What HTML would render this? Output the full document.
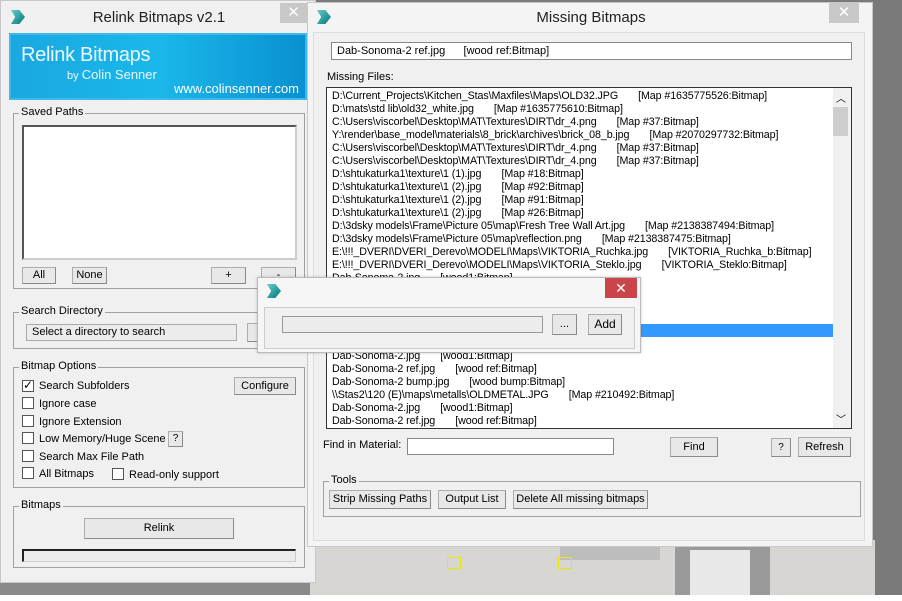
<!DOCTYPE html>
<html><head><meta charset="utf-8"><style>
*{box-sizing:border-box;margin:0;padding:0}
body{width:902px;height:601px;overflow:hidden;position:relative;background:#7a7a7a;font-family:"Liberation Sans",sans-serif;font-size:11px;color:#000}
.a{position:absolute}
.win{background:#f0f0f0;border:1px solid #c8c8c8}
.btn{position:absolute;background:#e8e8e8;border:1px solid #adadad;border-right-color:#8a8a8a;border-bottom-color:#8a8a8a;text-align:center;font-size:11px}
.grp{position:absolute;border:1px solid #a0a0a0}
.grp>.l{position:absolute;top:-8px;left:5px;background:#f0f0f0;padding:0 2px;font-size:11px}
.cb{position:absolute;width:12px;height:12px;border:1px solid #555;background:#fff}
.t{position:absolute;white-space:pre;font-size:11px}
.x{position:absolute;background:#c8c8c8;color:#fff;text-align:center;font-size:15px;line-height:20px}
.logo{position:absolute;width:14px;height:14px;background:linear-gradient(135deg,#6cc,#077);clip-path:polygon(0 0,60% 0,100% 50%,60% 100%,0 100%,30% 50%)}
.row{height:13px;line-height:13px;white-space:pre;font-size:10.7px;letter-spacing:-0.1px}
</style></head><body>
<div class="a" style="left:300px;top:540px;width:575px;height:56px;background:#d8d6d2"></div>
<div class="a" style="left:560px;top:540px;width:100px;height:20px;background:#bdbdbd"></div>
<div class="a" style="left:675px;top:540px;width:95px;height:56px;background:#9a9a9a"></div>
<div class="a" style="left:690px;top:550px;width:60px;height:46px;background:#e8e8e8"></div>
<div class="a" style="left:0;top:580px;width:310px;height:16px;background:#8a8a8a"></div>
<div class="a" style="left:0;top:595px;width:902px;height:6px;background:#fff"></div>
<div class="a" style="left:447px;top:557px;width:14px;height:12px;border:1px solid #e8e800"></div>
<div class="a" style="left:558px;top:557px;width:14px;height:12px;border:1px solid #e8e800"></div>

<div class="a win" style="left:0;top:0;width:316px;height:583px">
<div class="logo" style="left:10px;top:9px"></div>
<div class="t" style="left:0;width:316px;text-align:center;top:8px;font-size:15px;color:#222">Relink Bitmaps v2.1</div>
<div class="x" style="left:279px;top:2px;width:27px;height:20px">✕</div>
<div class="a" style="left:8px;top:32px;width:298px;height:67px;background:linear-gradient(90deg,#1aa8e0,#1ab8ea 50%,#0a90d0);border:2px solid #3fb8ea"></div>
<div class="t" style="left:20px;top:43px;font-size:20px;color:#eaf8ff;letter-spacing:-0.3px">Relink Bitmaps</div>
<div class="t" style="left:66px;top:66px;font-size:11px;color:#eaf8ff">by <span style="font-size:13px">Colin Senner</span></div>
<div class="t" style="left:173px;top:80px;font-size:13px;color:#fff">www.colinsenner.com</div>
<div class="grp" style="left:12px;top:112px;width:292px;height:176px"><span class="l">Saved Paths</span></div>
<div class="a" style="left:21px;top:124px;width:275px;height:135px;background:#fff;border:2px solid #555;border-right-color:#ccc;border-bottom-color:#ccc"></div>
<div class="btn" style="left:21px;top:266px;width:34px;height:17px;line-height:15px">All</div>
<div class="btn" style="left:71px;top:266px;width:35px;height:17px;line-height:15px">None</div>
<div class="btn" style="left:210px;top:266px;width:35px;height:17px;line-height:15px">+</div>
<div class="btn" style="left:260px;top:266px;width:35px;height:17px;line-height:15px">-</div>
<div class="grp" style="left:12px;top:311px;width:292px;height:37px"><span class="l">Search Directory</span></div>
<div class="a" style="left:25px;top:323px;width:211px;height:17px;border:1px solid #aaa;background:#ececec;padding-left:5px;line-height:15px">Select a directory to search</div>
<div class="btn" style="left:246px;top:322px;width:30px;height:19px;line-height:17px">B</div>
<div class="grp" style="left:12px;top:366px;width:292px;height:121px"><span class="l">Bitmap Options</span></div>
<div class="cb" style="left:21px;top:379px"><span style="position:absolute;left:0;top:-3px;font-size:12px">✓</span></div>
<div class="t" style="left:38px;top:379px">Search Subfolders</div>
<div class="btn" style="left:233px;top:376px;width:62px;height:18px;line-height:16px">Configure</div>
<div class="cb" style="left:21px;top:396px"></div><div class="t" style="left:38px;top:397px">Ignore case</div>
<div class="cb" style="left:21px;top:414px"></div><div class="t" style="left:38px;top:415px">Ignore Extension</div>
<div class="cb" style="left:21px;top:431px"></div><div class="t" style="left:38px;top:432px">Low Memory/Huge Scene</div>
<div class="btn" style="left:167px;top:430px;width:15px;height:16px;line-height:14px;font-size:10px">?</div>
<div class="cb" style="left:21px;top:449px"></div><div class="t" style="left:38px;top:450px">Search Max File Path</div>
<div class="cb" style="left:21px;top:466px"></div><div class="t" style="left:38px;top:467px">All Bitmaps</div>
<div class="cb" style="left:111px;top:467px"></div><div class="t" style="left:128px;top:468px">Read-only support</div>
<div class="grp" style="left:12px;top:505px;width:292px;height:62px"><span class="l">Bitmaps</span></div>
<div class="btn" style="left:83px;top:517px;width:150px;height:21px;line-height:19px">Relink</div>
<div class="a" style="left:21px;top:548px;width:274px;height:13px;border:1px solid #ccc;border-top:2px solid #222;border-left:2px solid #222;background:#ececec"></div>
</div>

<div class="a win" style="left:307px;top:2px;width:566px;height:545px;background:#f4f4f4">
<div class="logo" style="left:9px;top:7px"></div>
<div class="t" style="left:0;width:566px;text-align:center;top:6px;font-size:15px;color:#222">Missing Bitmaps</div>
<div class="x" style="left:521px;top:0;width:30px;height:20px">✕</div>
<div class="a" style="left:5px;top:29px;width:552px;height:509px;background:#f0f0f0;border:1px solid #ddd"></div>
<div class="a" style="left:23px;top:39px;width:521px;height:18px;background:#fff;border:1px solid #888;padding-left:5px;line-height:16px;white-space:pre">Dab-Sonoma-2 ref.jpg      [wood ref:Bitmap]</div>
<div class="t" style="left:19px;top:68px">Missing Files:</div>
<div class="a" style="left:18px;top:84px;width:526px;height:342px;background:#fff;border:1px solid #333;padding:2px 0 0 5px;overflow:hidden">
<div class="row">D:\Current_Projects\Kitchen_Stas\Maxfiles\Maps\OLD32.JPG       [Map #1635775526:Bitmap]</div>
<div class="row">D:\mats\std lib\old32_white.jpg       [Map #1635775610:Bitmap]</div>
<div class="row">C:\Users\viscorbel\Desktop\MAT\Textures\DIRT\dr_4.png       [Map #37:Bitmap]</div>
<div class="row">Y:\render\base_model\materials\8_brick\archives\brick_08_b.jpg       [Map #2070297732:Bitmap]</div>
<div class="row">C:\Users\viscorbel\Desktop\MAT\Textures\DIRT\dr_4.png       [Map #37:Bitmap]</div>
<div class="row">C:\Users\viscorbel\Desktop\MAT\Textures\DIRT\dr_4.png       [Map #37:Bitmap]</div>
<div class="row">D:\shtukaturka1\texture\1 (1).jpg       [Map #18:Bitmap]</div>
<div class="row">D:\shtukaturka1\texture\1 (2).jpg       [Map #92:Bitmap]</div>
<div class="row">D:\shtukaturka1\texture\1 (2).jpg       [Map #91:Bitmap]</div>
<div class="row">D:\shtukaturka1\texture\1 (2).jpg       [Map #26:Bitmap]</div>
<div class="row">D:\3dsky models\Frame\Picture 05\map\Fresh Tree Wall Art.jpg       [Map #2138387494:Bitmap]</div>
<div class="row">D:\3dsky models\Frame\Picture 05\map\reflection.png       [Map #2138387475:Bitmap]</div>
<div class="row">E:\!!!_DVERI\DVERI_Derevo\MODELI\Maps\VIKTORIA_Ruchka.jpg       [VIKTORIA_Ruchka_b:Bitmap]</div>
<div class="row">E:\!!!_DVERI\DVERI_Derevo\MODELI\Maps\VIKTORIA_Steklo.jpg       [VIKTORIA_Steklo:Bitmap]</div>
<div class="row">Dab-Sonoma-2.jpg       [wood1:Bitmap]</div>
<div class="row"> </div>
<div class="row"> </div>
<div class="row"> </div>
<div class="row" style="background:#3399ff;margin-left:-5px"> </div>
<div class="row"> </div>
<div class="row">Dab-Sonoma-2.jpg       [wood1:Bitmap]</div>
<div class="row">Dab-Sonoma-2 ref.jpg       [wood ref:Bitmap]</div>
<div class="row">Dab-Sonoma-2 bump.jpg       [wood bump:Bitmap]</div>
<div class="row">\\Stas2\120 (E)\maps\metalls\OLDMETAL.JPG       [Map #210492:Bitmap]</div>
<div class="row">Dab-Sonoma-2.jpg       [wood1:Bitmap]</div>
<div class="row">Dab-Sonoma-2 ref.jpg       [wood ref:Bitmap]</div>
</div>
<div class="a" style="left:525px;top:85px;width:18px;height:340px;background:#f0f0f0"></div>
<div class="a" style="left:525px;top:104px;width:15px;height:29px;background:#cdcdcd"></div>
<div class="t" style="left:528px;top:87px;font-size:10px">︿</div>
<div class="t" style="left:528px;top:408px;font-size:10px">﹀</div>
<div class="t" style="left:15px;top:436px">Find in Material:</div>
<div class="a" style="left:99px;top:435px;width:207px;height:17px;background:#fff;border:1px solid #888"></div>
<div class="btn" style="left:362px;top:434px;width:48px;height:20px;line-height:18px">Find</div>
<div class="btn" style="left:463px;top:435px;width:20px;height:19px;line-height:17px;font-size:10px">?</div>
<div class="btn" style="left:490px;top:434px;width:53px;height:20px;line-height:18px">Refresh</div>
<div class="grp" style="left:15px;top:478px;width:538px;height:36px;background:transparent"><span class="l">Tools</span></div>
<div class="btn" style="left:21px;top:487px;width:102px;height:19px;line-height:17px">Strip Missing Paths</div>
<div class="btn" style="left:130px;top:487px;width:68px;height:19px;line-height:17px">Output List</div>
<div class="btn" style="left:205px;top:487px;width:135px;height:19px;line-height:17px">Delete All missing bitmaps</div>
</div>

<div class="a" style="left:257px;top:277px;width:384px;height:76px;background:#f6f6f6;border:1px solid #bbb;box-shadow:0 0 3px rgba(0,0,0,.2)">
<div class="logo" style="left:9px;top:6px"></div>
<div class="a" style="left:347px;top:0;width:32px;height:20px;background:#c9454a;color:#fff;text-align:center;line-height:20px;font-size:14px">✕</div>
<div class="a" style="left:6px;top:29px;width:371px;height:42px;background:#f0f0f0;border:1px solid #ccc"></div>
<div class="a" style="left:24px;top:38px;width:261px;height:17px;border:1px solid #999;background:#ececec"></div>
<div class="btn" style="left:294px;top:36px;width:25px;height:21px;line-height:19px">...</div>
<div class="btn" style="left:330px;top:36px;width:34px;height:21px;line-height:19px;font-size:12px">Add</div>
</div>
</body></html>
